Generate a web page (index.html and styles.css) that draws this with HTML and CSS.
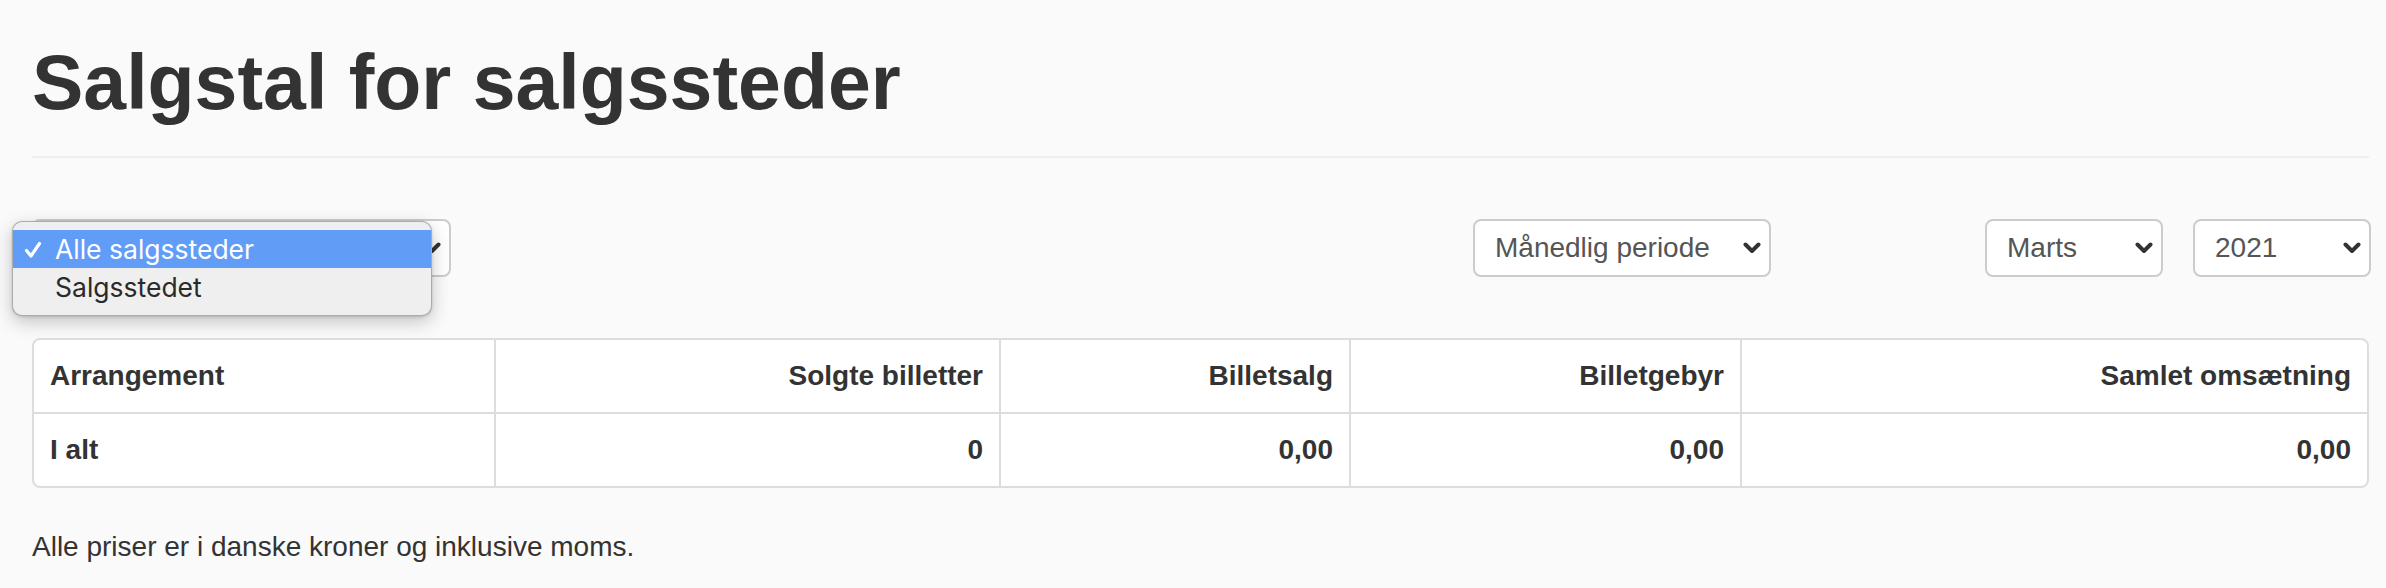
FILE: index.html
```html
<!DOCTYPE html>
<html lang="da">
<head>
<meta charset="utf-8">
<title>Salgstal for salgssteder</title>
<link rel="stylesheet" href="styles.css">
</head>
<body>
<main class="page">
  <header class="page-header">
    <h1 class="title">Salgstal for salgssteder</h1>
  </header>

  <section class="filters">
    <div class="select select-outlet">
      <span class="select-value">Alle salgssteder</span>
      <svg class="chevron" viewBox="0 0 18 12" width="18" height="12" aria-hidden="true"><path d="M2.5 2.5 L9 9 L15.5 2.5" /></svg>
      <ul class="menu">
        <li class="menu-item is-selected"><svg class="check" viewBox="0 0 18 18" width="18" height="18" aria-hidden="true"><path d="M2.5 9.5 L7 15 L15.5 2.5" /></svg>Alle salgssteder</li>
        <li class="menu-item">Salgsstedet</li>
      </ul>
    </div>

    <div class="select select-period">
      <span class="select-value">Månedlig periode</span>
      <svg class="chevron" viewBox="0 0 18 12" width="18" height="12" aria-hidden="true"><path d="M2.5 2.5 L9 9 L15.5 2.5" /></svg>
    </div>

    <div class="date-group">
      <div class="select select-month">
        <span class="select-value">Marts</span>
        <svg class="chevron" viewBox="0 0 18 12" width="18" height="12" aria-hidden="true"><path d="M2.5 2.5 L9 9 L15.5 2.5" /></svg>
      </div>
      <div class="select select-year">
        <span class="select-value">2021</span>
        <svg class="chevron" viewBox="0 0 18 12" width="18" height="12" aria-hidden="true"><path d="M2.5 2.5 L9 9 L15.5 2.5" /></svg>
      </div>
    </div>
  </section>

  <div class="table-panel">
    <table class="sales-table">
      <colgroup>
        <col class="col-event">
        <col class="col-tickets">
        <col class="col-sales">
        <col class="col-fee">
        <col class="col-total">
      </colgroup>
      <thead>
        <tr>
          <th class="left">Arrangement</th>
          <th>Solgte billetter</th>
          <th>Billetsalg</th>
          <th>Billetgebyr</th>
          <th>Samlet omsætning</th>
        </tr>
      </thead>
      <tbody>
        <tr>
          <td class="left">I alt</td>
          <td>0</td>
          <td>0,00</td>
          <td>0,00</td>
          <td>0,00</td>
        </tr>
      </tbody>
    </table>
  </div>

  <p class="note">Alle priser er i danske kroner og inklusive moms.</p>
</main>
</body>
</html>
```

FILE: styles.css
```css
* {
  box-sizing: border-box;
}

html, body {
  margin: 0;
  padding: 0;
  background: #fafafa;
}

body {
  font-family: "Liberation Sans", Arial, sans-serif;
  font-size: 28px;
  line-height: 40px;
  color: #333;
}

.page {
  padding: 0 17px 0 32px;
}

.page-header {
  padding-bottom: 32px;
  border-bottom: 2px solid #eeeeee;
}

.title {
  margin: 40px 0 0;
  font-size: 77px;
  line-height: 84px;
  font-weight: bold;
  color: #333;
}

.filters {
  display: flex;
  align-items: center;
  margin-top: 61px;
}

.select {
  position: relative;
  display: flex;
  align-items: center;
  justify-content: space-between;
  height: 58px;
  padding: 0 8px 0 20px;
  background: #fff;
  border: 2px solid #cccccc;
  border-radius: 8px;
  color: #555;
  font-size: 28px;
}

.select-value {
  white-space: nowrap;
}

.chevron {
  flex: none;
  display: block;
}

.chevron path {
  fill: none;
  stroke: #333;
  stroke-width: 4;
  stroke-linecap: round;
  stroke-linejoin: round;
}

.select-outlet {
  width: 419px;
}

.select-period {
  width: 298px;
  margin-left: auto;
  margin-right: 214px;
}

.date-group {
  display: flex;
  gap: 30px;
  margin-right: -2px;
}

.select-month,
.select-year {
  width: 178px;
}

/* open native-like dropdown menu */
.menu {
  position: absolute;
  left: -22px;
  top: 0;
  width: 420px;
  margin: 0;
  padding: 8px 0 9px;
  list-style: none;
  background: #efefef;
  border: 1px solid rgba(0, 0, 0, 0.28);
  border-radius: 10px;
  box-shadow: 0 6px 18px rgba(0, 0, 0, 0.22), 0 1px 3px rgba(0, 0, 0, 0.15);
  font-family: Inter, "Noto Sans", sans-serif;
  font-size: 26.5px;
  color: #2a2a2a;
  z-index: 10;
}

.menu-item {
  position: relative;
  height: 38px;
  line-height: 38px;
  padding-left: 42px;
}

.menu-item.is-selected {
  background: #619cf7;
  color: #fff;
}

.check {
  position: absolute;
  left: 11px;
  top: 11px;
}

.check path {
  fill: none;
  stroke: #fff;
  stroke-width: 3.2;
  stroke-linecap: round;
  stroke-linejoin: round;
}

.table-panel {
  margin-top: 61px;
  background: #fff;
  border: 2px solid #dddddd;
  border-radius: 8px;
  overflow: hidden;
}

.sales-table {
  width: 100%;
  table-layout: fixed;
  border-collapse: separate;
  border-spacing: 0;
}

.col-event { width: 462px; }
.col-tickets { width: 505px; }
.col-sales { width: 350px; }
.col-fee { width: 391px; }

.sales-table th,
.sales-table td {
  padding: 16px 16px;
  font-weight: bold;
  text-align: right;
  color: #333;
  border-right: 2px solid #dddddd;
  white-space: nowrap;
}

.sales-table th:last-child,
.sales-table td:last-child {
  border-right: 0;
}

.sales-table thead th {
  border-bottom: 2px solid #dddddd;
}

.sales-table .left {
  text-align: left;
}

.note {
  margin: 39px 0 0;
  color: #333;
}
```
